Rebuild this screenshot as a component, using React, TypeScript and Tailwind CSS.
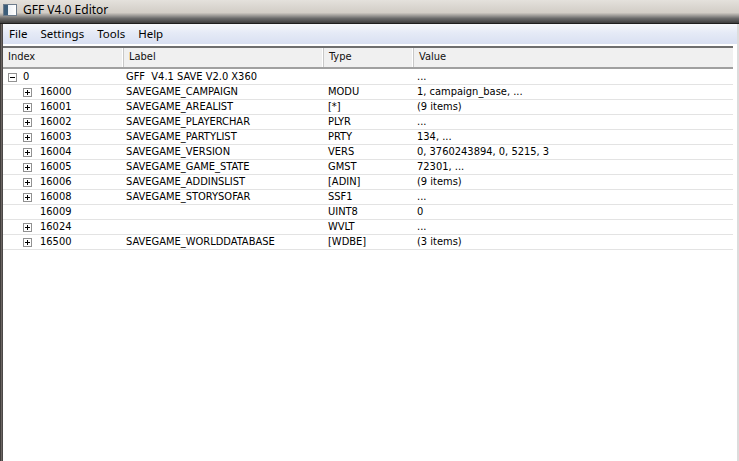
import React from "react";

type Row = {
  index: string;
  label: string;
  type: string;
  value: string;
  depth: number;
  box: "plus" | "minus" | null;
};

const ROWS: Row[] = [
  { index: "0", label: "GFF  V4.1 SAVE V2.0 X360", type: "", value: "...", depth: 0, box: "minus" },
  { index: "16000", label: "SAVEGAME_CAMPAIGN", type: "MODU", value: "1, campaign_base, ...", depth: 1, box: "plus" },
  { index: "16001", label: "SAVEGAME_AREALIST", type: "[*]", value: "(9 items)", depth: 1, box: "plus" },
  { index: "16002", label: "SAVEGAME_PLAYERCHAR", type: "PLYR", value: "...", depth: 1, box: "plus" },
  { index: "16003", label: "SAVEGAME_PARTYLIST", type: "PRTY", value: "134, ...", depth: 1, box: "plus" },
  { index: "16004", label: "SAVEGAME_VERSION", type: "VERS", value: "0, 3760243894, 0, 5215, 3", depth: 1, box: "plus" },
  { index: "16005", label: "SAVEGAME_GAME_STATE", type: "GMST", value: "72301, ...", depth: 1, box: "plus" },
  { index: "16006", label: "SAVEGAME_ADDINSLIST", type: "[ADIN]", value: "(9 items)", depth: 1, box: "plus" },
  { index: "16008", label: "SAVEGAME_STORYSOFAR", type: "SSF1", value: "...", depth: 1, box: "plus" },
  { index: "16009", label: "", type: "UINT8", value: "0", depth: 1, box: null },
  { index: "16024", label: "", type: "WVLT", value: "...", depth: 1, box: "plus" },
  { index: "16500", label: "SAVEGAME_WORLDDATABASE", type: "[WDBE]", value: "(3 items)", depth: 1, box: "plus" },
];

function ExpandBox({ kind }: { kind: "plus" | "minus" }) {
  return (
    <svg width="9" height="9" viewBox="0 0 9 9" className="shrink-0">
      <rect x="0.5" y="0.5" width="8" height="8" fill="#fff" stroke="#919191" />
      <line x1="2" y1="4.5" x2="7" y2="4.5" stroke="#000" />
      {kind === "plus" && <line x1="4.5" y1="2" x2="4.5" y2="7" stroke="#000" />}
    </svg>
  );
}

function HeaderCell({ label, w }: { label: string; w: string }) {
  return (
    <div className={`${w} h-full flex items-center pl-[5px] border-r border-[#c8c8c8] shadow-[inset_-1px_0_0_#fff]`}>
      {label}
    </div>
  );
}

export default function App() {
  return (
    <div
      className="w-[739px] h-[461px] overflow-hidden flex flex-col bg-white text-black"
      style={{ fontFamily: "Tahoma, 'DejaVu Sans Condensed', 'Liberation Sans', sans-serif" }}
    >
      {/* title bar */}
      <div className="h-[23px] shrink-0 flex items-center bg-[linear-gradient(to_bottom,#e4e1dc_0%,#d2cdc6_55%,#6b6b6b_80%,#3c3c3c_100%)]">
        <div className="ml-[3px] w-[14px] h-[12px] -mt-[3px] border border-[#6d7c8c] bg-[linear-gradient(to_right,#3d5e7a_0%,#3d5e7a_30%,#e9eef3_30%,#ffffff_100%)]" />
        <span
          className="ml-[6px] -mt-[3px] text-[12px] text-black"
          style={{ fontFamily: "'Noto Sans', 'Open Sans', sans-serif" }}
        >
          GFF V4.0 Editor
        </span>
      </div>

      <div className="flex-1 flex border-t border-[#1e1e1e]">
        {/* left frame */}
        <div className="w-[3px] bg-[linear-gradient(to_right,#2a2a2a,#6c6562,#3a3a3a)]" />

        <div className="flex-1 flex flex-col">
          {/* menu bar */}
          <div
            className="h-[20px] shrink-0 flex items-center gap-[13px] pl-[6px] text-[11.5px] bg-[linear-gradient(to_bottom,#f6f8fc_0%,#e5eaf6_45%,#d9e0f2_100%)]"
            style={{ fontFamily: "'Noto Sans', 'Open Sans', sans-serif" }}
          >
            <span>File</span>
            <span>Settings</span>
            <span>Tools</span>
            <span>Help</span>
          </div>

          {/* tree widget */}
          <div className="flex-1 flex flex-col mt-[2px] mr-[4px] border-t-[2px] border-[#6f6f6f] bg-white text-[11px]">
            <div className="h-[21px] shrink-0 flex bg-[#f0f0f0] border-b-[2px] border-[#a0a0a0] text-[#111]">
              <HeaderCell label="Index" w="w-[121px]" />
              <HeaderCell label="Label" w="w-[200px]" />
              <HeaderCell label="Type" w="w-[90px]" />
              <div className="flex-1 h-full flex items-center pl-[5px]">Value</div>
            </div>

            <div className="pt-[1px]">
              {ROWS.map((r) => (
                <div key={r.index} className="h-[15px] flex items-center border-b border-[#e3e3e3]">
                  <div className="w-[121px] flex items-center">
                    <div className={`${r.depth === 0 ? "w-[20px] pl-[5px]" : "w-[37px] pl-[20px]"} flex items-center`}>
                      {r.box && <ExpandBox kind={r.box} />}
                    </div>
                    <span>{r.index}</span>
                  </div>
                  <div className="w-[200px] pl-[2px] whitespace-pre">{r.label}</div>
                  <div className="w-[90px] pl-[4px] whitespace-nowrap">{r.type}</div>
                  <div className="flex-1 pl-[3px] whitespace-nowrap">{r.value}</div>
                </div>
              ))}
            </div>
          </div>
        </div>

        {/* right frame */}
        <div className="w-[2px] bg-[#dcdcdc]" />
      </div>
    </div>
  );
}
